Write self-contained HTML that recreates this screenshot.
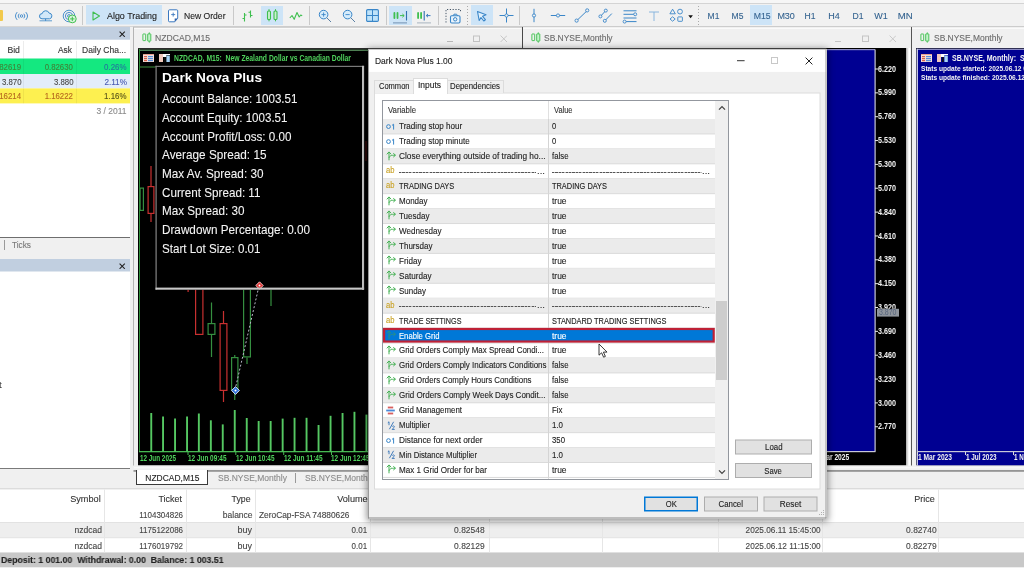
<!DOCTYPE html>
<html><head><meta charset="utf-8"><title>MetaTrader 5</title>
<style>
html,body{margin:0;padding:0;}
body{width:1024px;height:576px;overflow:hidden;background:#f0f0f0;position:relative;font-family:"Liberation Sans",sans-serif;}
div,span,svg{position:absolute;box-sizing:border-box;}
span{display:block;-webkit-text-stroke:0.12px;}
</style></head><body><div style="left:0;top:0;width:1024px;height:576px;will-change:transform;">
<div style="left:0px;top:0px;width:1024px;height:3px;background:#f6f6f6;"></div>
<div style="left:0px;top:3px;width:1024px;height:1px;background:#d4d4d4;"></div>
<div style="left:0px;top:4px;width:1024px;height:22px;background:#f1f1f1;"></div>
<div style="left:0px;top:26px;width:1024px;height:1px;background:#d6d6d6;"></div>
<div style="left:-3px;top:10px;width:6px;height:11px;background:#f2c94c;border-radius:1px;"></div>
<svg style="left:13px;top:8.7px;" width="17" height="14" viewBox="0 0 17 14" fill="none"><g transform="translate(8.5,7)"><circle cx="0" cy="0" r="1.25" stroke="#3a86c8" stroke-width=".9"/><path d="M-2.3 -2.3a3.3 3.3 0 0 0 0 4.6M2.3 -2.3a3.3 3.3 0 0 1 0 4.6M-4.3 -3.9a5.9 5.9 0 0 0 0 7.8M4.3 -3.9a5.9 5.9 0 0 1 0 7.8" stroke="#3a86c8" stroke-width="0.9"/></g></svg>
<svg style="left:38px;top:8.5px;" width="16" height="14" viewBox="0 0 16 14" fill="none"><path d="M4 9.8a2.6 2.6 0 0 1 .2-5.2a3.6 3.6 0 0 1 6.9-.5a2.9 2.9 0 0 1 .6 5.7z" fill="#d2e8f9" stroke="#3a86c8" stroke-width="1"/><path d="M7.6 9.8v2" stroke="#3a86c8" stroke-width="1"/><path d="M1.5 11.8h12.5" stroke="#3a86c8" stroke-width=".8"/></svg>
<svg style="left:62px;top:8.5px;" width="17" height="16" viewBox="0 0 17 16" fill="none"><circle cx="7" cy="7" r="1.4" stroke="#3a86c8" stroke-width="0.9"/><circle cx="7" cy="7" r="3.6" stroke="#3a86c8" stroke-width="0.9"/><circle cx="7" cy="7" r="5.8" stroke="#3a86c8" stroke-width="0.9"/><circle cx="10.3" cy="9.9" r="3.9" fill="#dcf6df" stroke="#3fbf4f" stroke-width="1"/><path d="M10.3 7.7v4.4M8.1 9.9h4.4" stroke="#3fbf4f" stroke-width="1"/></svg>
<div style="left:82px;top:6px;width:1px;height:19px;background:#c9c9c9;"></div>
<svg style="left:86px;top:5px;" width="76" height="20"><rect x="0" y="0" width="76" height="19.5" fill="#cde4f7"/></svg>
<svg style="left:92px;top:10.5px;" width="9" height="10" viewBox="0 0 9 10" fill="none"><path d="M1 1l6.5 4L1 9z" stroke="#3fbf4f" stroke-width="1.1" stroke-linejoin="round"/></svg>
<span style="top:9.80px;line-height:12px;height:12px;font-size:9.6px;color:#222;white-space:pre;left:106.50px;transform:scaleX(0.9281);transform-origin:left center;">Algo Trading</span>
<svg style="left:168px;top:8.5px;" width="11" height="14" viewBox="0 0 11 14" fill="none"><path d="M1.5 .8h7.2a1 1 0 0 1 1 1v7.4l-3 3.6H1.5a1 1 0 0 1-1-1V1.8a1 1 0 0 1 1-1z" fill="#fff" stroke="#3a78c0" stroke-width="1"/><path d="M9.7 9.4l-3 3.4v-3.4z" fill="#2b5fa8"/><path d="M5.2 3.6v4M3.2 5.6h4" stroke="#3a78c0" stroke-width="0.9"/></svg>
<span style="top:9.80px;line-height:12px;height:12px;font-size:9.6px;color:#222;white-space:pre;left:184.00px;transform:scaleX(0.8946);transform-origin:left center;">New Order</span>
<div style="left:233px;top:6px;width:1px;height:19px;background:#c9c9c9;"></div>
<svg style="left:241px;top:9.5px;" width="13" height="12" viewBox="0 0 13 12" fill="none"><path d="M3.5 3v8.5M1.5 8.5h2M3.5 5h2M9.5 .5v7M7.5 2.2h2M9.5 5.5h2" stroke="#3fbf4f" stroke-width="1.1"/></svg>
<div style="left:261px;top:6px;width:22px;height:19px;background:#cde4f7;"></div>
<svg style="left:265px;top:8.1px;" width="15" height="15" viewBox="0 0 15 15" fill="none"><rect x="2.5" y="3" width="3" height="8.5" rx="1" stroke="#3fbf4f" stroke-width="1.1" fill="#c9f0cf"/><path d="M4 1.2v1.8M4 11.5v1.8" stroke="#3fbf4f" stroke-width="1"/><rect x="9" y="3" width="3" height="8.5" rx="1" stroke="#3fbf4f" stroke-width="1.1" fill="#c9f0cf"/><path d="M10.5 1.2v1.8M10.5 11.5v1.8" stroke="#3fbf4f" stroke-width="1"/></svg>
<svg style="left:289px;top:9.5px;" width="14" height="12" viewBox="0 0 14 12" fill="none"><path d="M.8 8l2.2-2.5 2.2 3.8L8 2.5l2.2 4.5 1.5-2 1.5 .8" stroke="#3fbf4f" stroke-width="1.1" stroke-linejoin="round"/></svg>
<div style="left:309px;top:6px;width:1px;height:19px;background:#c9c9c9;"></div>
<svg style="left:317.5px;top:9px;" width="14" height="14" viewBox="0 0 14 14" fill="none"><circle cx="5.6" cy="5.6" r="4.3" fill="#d6ecfb" stroke="#3a86c8" stroke-width="1"/><path d="M8.8 8.8l4.2 4.2" stroke="#5a7fa3" stroke-width="1"/><path d="M3.5 5.6h4.2" stroke="#3a86c8" stroke-width="0.9"/><path d="M5.6 3.5v4.2" stroke="#3a86c8" stroke-width="0.9"/></svg>
<svg style="left:341.5px;top:9px;" width="14" height="14" viewBox="0 0 14 14" fill="none"><circle cx="5.6" cy="5.6" r="4.3" fill="#d6ecfb" stroke="#3a86c8" stroke-width="1"/><path d="M8.8 8.8l4.2 4.2" stroke="#5a7fa3" stroke-width="1"/><path d="M3.5 5.6h4.2" stroke="#3a86c8" stroke-width="0.9"/></svg>
<svg style="left:366px;top:9.1px;" width="13" height="13" viewBox="0 0 13 13" fill="none"><rect x=".6" y=".6" width="11.8" height="11.8" rx="1.2" fill="#bfe3fa" stroke="#3a86c8" stroke-width="1.1"/><path d="M6.5 .6v11.8M.6 6.5h11.8" stroke="#3a86c8" stroke-width="1"/></svg>
<div style="left:386px;top:6px;width:1px;height:19px;background:#c9c9c9;"></div>
<div style="left:389px;top:6px;width:23px;height:19px;background:#cde4f7;"></div>
<svg style="left:392px;top:9.5px;" width="17" height="14" viewBox="0 0 17 14" fill="none"><rect x="1.5" y="2" width="1.8" height="7" rx=".9" fill="#3fbf4f"/><rect x="4.6" y="2" width="1.8" height="7" rx=".9" fill="#3fbf4f"/><path d="M8 5.6h4M10.4 4l1.8 1.6-1.8 1.6" stroke="#3fbf4f" stroke-width="1"/><path d="M14.5 1v9.5" stroke="#2f6fae" stroke-width="1.1"/><path d="M1 12.9h14" stroke="#4a6f96" stroke-width="0.7"/></svg>
<svg style="left:416px;top:9.5px;" width="17" height="14" viewBox="0 0 17 14" fill="none"><rect x="1.2" y="2" width="1.8" height="7" rx=".9" fill="#3fbf4f"/><rect x="4.2" y="2" width="1.8" height="7" rx=".9" fill="#3fbf4f"/><path d="M8.2 1v9.5" stroke="#2f6fae" stroke-width="1.1"/><path d="M10.5 5.6h4M12 4l-1.8 1.6 1.8 1.6" stroke="#3a78c0" stroke-width="1"/><path d="M1 12.9h14" stroke="#8a9aaa" stroke-width="0.7"/></svg>
<div style="left:438px;top:6px;width:1px;height:19px;background:#c9c9c9;"></div>
<svg style="left:445px;top:7.5px;" width="18" height="17" viewBox="0 0 18 17" fill="none"><path d="M1 14.5V1.5h14.5v3" stroke="#456" stroke-width="1" stroke-dasharray="1.2 1.6"/><rect x="5.5" y="7.8" width="9.5" height="7.2" rx="1.2" stroke="#3a86c8" stroke-width="1.1" fill="#eaf4fc"/><path d="M8 7.8l1-1.6h2.6l1 1.6" stroke="#3a86c8" stroke-width="1"/><circle cx="10.2" cy="11.3" r="1.7" stroke="#3a86c8" stroke-width="1"/></svg>
<div style="left:467px;top:6px;width:1px;height:19px;background:repeating-linear-gradient(to bottom,#aaa 0 1px,transparent 1px 3px);"></div>
<div style="left:471px;top:5px;width:22px;height:20px;background:#cde4f7;"></div>
<svg style="left:476px;top:9.5px;" width="12" height="12" viewBox="0 0 12 12" fill="none"><path d="M1.5 1.5l8.5 3.2-3.4 1.6 2.8 3.4-1.6 1.3-2.8-3.5-1.8 3z" stroke="#3a86c8" stroke-width="1.1" stroke-linejoin="round" fill="#dff0fc"/></svg>
<svg style="left:499px;top:8.1px;" width="15" height="15" viewBox="0 0 15 15" fill="none"><path d="M7.5 .5v14M.5 7.5h14" stroke="#3a86c8" stroke-width="1"/><circle cx="7.5" cy="7.5" r="1.6" fill="#f1f1f1" stroke="#3a86c8" stroke-width="0.9"/></svg>
<div style="left:519px;top:6px;width:1px;height:19px;background:#c9c9c9;"></div>
<svg style="left:528px;top:7.8px;" width="12" height="15" viewBox="0 0 12 15" fill="none"><path d="M6 .8v13.4" stroke="#3a86c8" stroke-width="1"/><circle cx="6" cy="7.5" r="1.6" fill="#f1f1f1" stroke="#3a86c8" stroke-width="0.9"/></svg>
<svg style="left:550px;top:9.1px;" width="16" height="12" viewBox="0 0 16 12" fill="none"><path d="M.8 6.5h14.4" stroke="#3a86c8" stroke-width="1"/><circle cx="8" cy="6.5" r="1.6" fill="#f1f1f1" stroke="#3a86c8" stroke-width="0.9"/></svg>
<svg style="left:574px;top:8.1px;" width="16" height="15" viewBox="0 0 16 15" fill="none"><path d="M3 12.4L13 2.8" stroke="#3a86c8" stroke-width="1"/><circle cx="2.6" cy="12.6" r="1.6" fill="#f1f1f1" stroke="#3a86c8" stroke-width="0.9"/><circle cx="13.2" cy="2.4" r="1.6" fill="#f1f1f1" stroke="#3a86c8" stroke-width="0.9"/></svg>
<svg style="left:598px;top:8.1px;" width="16" height="15" viewBox="0 0 16 15" fill="none"><path d="M2.8 8L7.4 3M7.2 12.4L13.8 5.6" stroke="#3a86c8" stroke-width="1"/><circle cx="2.4" cy="8.4" r="1.5" fill="#f1f1f1" stroke="#3a86c8" stroke-width="0.9"/><circle cx="7.8" cy="2.6" r="1.5" fill="#f1f1f1" stroke="#3a86c8" stroke-width="0.9"/><circle cx="6.8" cy="12.8" r="1.5" fill="#f1f1f1" stroke="#3a86c8" stroke-width="0.9"/></svg>
<svg style="left:622px;top:8.5px;" width="16" height="15" viewBox="0 0 16 15" fill="none"><path d="M1.5 1.8h13M1.5 5.3h10.5M1.5 9h13M4 12.6h10.5" stroke="#3a86c8" stroke-width="1"/><circle cx="13.2" cy="5.3" r="1.5" fill="#f1f1f1" stroke="#3a86c8" stroke-width="0.9"/><circle cx="2.6" cy="12.6" r="1.5" fill="#f1f1f1" stroke="#3a86c8" stroke-width="0.9"/></svg>
<svg style="left:648px;top:9.5px;" width="12" height="13" viewBox="0 0 12 13" fill="none"><path d="M1 2h10M6 2v9" stroke="#7fb0dc" stroke-width=".9"/></svg>
<svg style="left:669px;top:8.1px;" width="15" height="15" viewBox="0 0 15 15" fill="none"><path d="M3.6 1.2l2.7 4.6H.9z" stroke="#3a86c8" stroke-width="0.9"/><circle cx="11" cy="3.6" r="2.4" stroke="#3a86c8" stroke-width="0.9"/><path d="M3.6 8.8l2.6 2.2-2.6 2.2L1 11z" stroke="#3a86c8" stroke-width="0.9"/><rect x="8.8" y="8.9" width="4.6" height="4.4" rx=".5" stroke="#3a86c8" stroke-width="0.9"/></svg>
<svg style="left:688px;top:14.5px;" width="6" height="4" viewBox="0 0 6 4" fill="none"><path d="M.3 .3h4.6L2.6 3.2z" fill="#111"/></svg>
<div style="left:698px;top:6px;width:1px;height:19px;background:repeating-linear-gradient(to bottom,#aaa 0 1px,transparent 1px 3px);"></div>
<div style="left:750px;top:5px;width:22px;height:20px;background:#cde4f7;"></div>
<span style="top:9.70px;line-height:12px;height:12px;font-size:9.4px;color:#33628f;white-space:pre;left:706.98px;transform:scaleX(0.9055);transform-origin:center center;-webkit-text-stroke:0.1px;">M1</span>
<span style="top:9.70px;line-height:12px;height:12px;font-size:9.4px;color:#33628f;white-space:pre;left:731.48px;transform:scaleX(0.9132);transform-origin:center center;-webkit-text-stroke:0.1px;">M5</span>
<span style="top:9.70px;line-height:12px;height:12px;font-size:9.4px;color:#33628f;white-space:pre;left:752.88px;transform:scaleX(0.9315);transform-origin:center center;-webkit-text-stroke:0.1px;">M15</span>
<span style="top:9.70px;line-height:12px;height:12px;font-size:9.4px;color:#33628f;white-space:pre;left:776.67px;transform:scaleX(0.9589);transform-origin:center center;-webkit-text-stroke:0.1px;">M30</span>
<span style="top:9.70px;line-height:12px;height:12px;font-size:9.4px;color:#33628f;white-space:pre;left:804.01px;transform:scaleX(0.9179);transform-origin:center center;-webkit-text-stroke:0.1px;">H1</span>
<span style="top:9.70px;line-height:12px;height:12px;font-size:9.4px;color:#33628f;white-space:pre;left:827.81px;transform:scaleX(0.9596);transform-origin:center center;-webkit-text-stroke:0.1px;">H4</span>
<span style="top:9.70px;line-height:12px;height:12px;font-size:9.4px;color:#33628f;white-space:pre;left:851.51px;transform:scaleX(0.9179);transform-origin:center center;-webkit-text-stroke:0.1px;">D1</span>
<span style="top:9.70px;line-height:12px;height:12px;font-size:9.4px;color:#33628f;white-space:pre;left:874.27px;transform:scaleX(0.9600);transform-origin:center center;-webkit-text-stroke:0.1px;">W1</span>
<span style="top:9.70px;line-height:12px;height:12px;font-size:9.4px;color:#33628f;white-space:pre;left:898.20px;transform:scaleX(1.0278);transform-origin:center center;-webkit-text-stroke:0.1px;">MN</span>
<div style="left:0px;top:27px;width:130px;height:441px;background:#ffffff;"></div>
<svg style="left:0px;top:27px;" width="130" height="13"><rect x="0" y="0" width="130" height="12.7" fill="#c1cfe0"/></svg>
<svg style="left:119.3px;top:30.6px;" width="6.4" height="6.4" viewBox="0 0 6.4 6.4"><path d="M.6 .6L5.8 5.8M5.8 .6L.6 5.8" stroke="#222" stroke-width="1.1" fill="none"/></svg>
<div style="left:23px;top:41px;width:1px;height:17px;background:#ececec;"></div>
<div style="left:76px;top:41px;width:1px;height:17px;background:#ececec;"></div>
<span style="top:43.80px;line-height:12px;height:12px;font-size:9.6px;color:#333;white-space:pre;left:5.62px;transform:scaleX(0.9009);transform-origin:right center;">Bid</span>
<span style="top:43.80px;line-height:12px;height:12px;font-size:9.6px;color:#333;white-space:pre;left:56.00px;transform:scaleX(0.8750);transform-origin:right center;">Ask</span>
<span style="top:43.80px;line-height:12px;height:12px;font-size:9.6px;color:#333;white-space:pre;left:82.00px;transform:scaleX(0.8872);transform-origin:left center;">Daily Cha...</span>
<svg style="left:0px;top:58px;" width="130" height="16"><rect x="0" y="0.5" width="130" height="15.5" fill="#14e880"/></svg>
<svg style="left:23px;top:58px;" width="1" height="16"><rect x="0" y="0.5" width="1" height="15.5" fill="rgba(0,0,0,.05)"/></svg>
<svg style="left:76px;top:58px;" width="1" height="16"><rect x="0" y="0.5" width="1" height="15.5" fill="rgba(0,0,0,.05)"/></svg>
<span style="top:60.55px;line-height:12px;height:12px;font-size:9.4px;color:#3f8438;white-space:pre;left:-5.08px;transform:scaleX(0.8398);transform-origin:right center;">82619</span>
<span style="top:60.55px;line-height:12px;height:12px;font-size:9.4px;color:#3f8438;white-space:pre;left:39.11px;transform:scaleX(0.8336);transform-origin:right center;">0.82630</span>
<span style="top:60.55px;line-height:12px;height:12px;font-size:9.4px;color:#25789c;white-space:pre;left:100.41px;transform:scaleX(0.8461);transform-origin:right center;">0.26%</span>
<svg style="left:0px;top:74px;" width="130" height="15"><rect x="0" y="0" width="130" height="14.4" fill="#e3edf9"/></svg>
<svg style="left:23px;top:74px;" width="1" height="15"><rect x="0" y="0" width="1" height="14.4" fill="rgba(0,0,0,.05)"/></svg>
<svg style="left:76px;top:74px;" width="1" height="15"><rect x="0" y="0" width="1" height="14.4" fill="rgba(0,0,0,.05)"/></svg>
<span style="top:75.50px;line-height:12px;height:12px;font-size:9.4px;color:#484848;white-space:pre;left:-2.47px;transform:scaleX(0.8309);transform-origin:right center;">3.870</span>
<span style="top:75.50px;line-height:12px;height:12px;font-size:9.4px;color:#484848;white-space:pre;left:49.53px;transform:scaleX(0.8309);transform-origin:right center;">3.880</span>
<span style="top:75.50px;line-height:12px;height:12px;font-size:9.4px;color:#4858b0;white-space:pre;left:101.11px;transform:scaleX(0.8690);transform-origin:right center;">2.11%</span>
<svg style="left:0px;top:88px;" width="130" height="16"><rect x="0" y="0.4" width="130" height="15" fill="#fdf050"/></svg>
<svg style="left:23px;top:88px;" width="1" height="16"><rect x="0" y="0.4" width="1" height="15" fill="rgba(0,0,0,.05)"/></svg>
<svg style="left:76px;top:88px;" width="1" height="16"><rect x="0" y="0.4" width="1" height="15" fill="rgba(0,0,0,.05)"/></svg>
<span style="top:90.20px;line-height:12px;height:12px;font-size:9.4px;color:#b4661e;white-space:pre;left:-5.08px;transform:scaleX(0.8398);transform-origin:right center;">16214</span>
<span style="top:90.20px;line-height:12px;height:12px;font-size:9.4px;color:#b4661e;white-space:pre;left:39.11px;transform:scaleX(0.8336);transform-origin:right center;">1.16222</span>
<span style="top:90.20px;line-height:12px;height:12px;font-size:9.4px;color:#55501a;white-space:pre;left:100.41px;transform:scaleX(0.8461);transform-origin:right center;">1.16%</span>
<span style="top:105.00px;line-height:12px;height:12px;font-size:9.2px;color:#8a8a8a;white-space:pre;left:94.47px;transform:scaleX(0.9222);transform-origin:right center;">3 / 2011</span>
<div style="left:0px;top:237px;width:130px;height:1px;background:#6e6e6e;"></div>
<div style="left:0px;top:238px;width:130px;height:21px;background:#f0f0f0;"></div>
<div style="left:4px;top:240px;width:1px;height:10px;background:#9a9a9a;"></div>
<span style="top:238.70px;line-height:12px;height:12px;font-size:9.4px;color:#777;white-space:pre;left:12.00px;transform:scaleX(0.8824);transform-origin:left center;">Ticks</span>
<svg style="left:0px;top:259px;" width="130" height="13"><rect x="0" y="0" width="130" height="12.5" fill="#c1cfe0"/></svg>
<svg style="left:119.3px;top:262.6px;" width="6.4" height="6.4" viewBox="0 0 6.4 6.4"><path d="M.6 .6L5.8 5.8M5.8 .6L.6 5.8" stroke="#222" stroke-width="1.1" fill="none"/></svg>
<span style="top:379.00px;line-height:12px;height:12px;font-size:9.4px;color:#333;white-space:pre;left:-1.00px;">t</span>
<div style="left:0px;top:468px;width:130px;height:1px;background:#7a7a7a;"></div>
<div style="left:0px;top:469px;width:130px;height:19px;background:#f0f0f0;"></div>
<div style="left:133px;top:27px;width:389px;height:442px;background:#f0f0f0;"></div>
<div style="left:133px;top:27px;width:1px;height:442px;background:#b4b4b4;"></div>
<svg style="left:133px;top:26px;" width="891" height="2"><rect x="0" y="0.6" width="891" height="1" fill="#bebebe"/></svg>
<div style="left:134px;top:28px;width:387px;height:1px;background:#fafafa;"></div>
<svg style="left:141.5px;top:32px;" width="10" height="11" viewBox="0 0 10 11" fill="none"><rect x=".9" y="2" width="2.8" height="6.6" rx=".3" stroke="#4cc45a" stroke-width="1"/><rect x="5.7" y="1.9" width="3.1" height="7.2" rx=".3" stroke="#4cc45a" stroke-width="1" fill="#c4f2ca"/><path d="M7.3 .3v1.7M7.3 9v1.7" stroke="#4cc45a" stroke-width=".9"/></svg>
<span style="top:31.60px;line-height:12px;height:12px;font-size:9.6px;color:#6a6a6a;white-space:pre;left:155.00px;transform:scaleX(0.8970);transform-origin:left center;">NZDCAD,M15</span>
<div style="left:447px;top:41px;width:6px;height:1px;background:#b8b8b8;"></div>
<svg style="left:473px;top:35px;" width="7" height="7"><rect x="0.5" y="1" width="6" height="5.5" fill="none" stroke="#c2c2c2" stroke-width="1"/></svg>
<svg style="left:499.7px;top:34.9px;" width="7.6" height="7.6" viewBox="0 0 7.6 7.6"><path d="M.6 .6L7 7M7 .6L.6 7" stroke="#c2c2c2" stroke-width="0.9" fill="none"/></svg>
<svg style="left:138px;top:48px;" width="384" height="418"><rect x="0" y="0" width="384" height="417.5" fill="#000"/></svg>
<svg style="left:138px;top:48px;" width="384" height="2"><rect x="0" y="0" width="384" height="1.4" fill="#2c2c2c"/></svg>
<svg style="left:139px;top:49px;" width="383" height="2"><rect x="0" y="0.6" width="383" height="1.4" fill="#4f7f54"/></svg>
<div style="left:139px;top:49px;width:1px;height:403px;background:#2f8f3a;"></div>
<svg style="left:139px;top:451px;" width="383" height="2"><rect x="0" y="0" width="383" height="1.3" fill="#46b852"/></svg>
<svg style="left:143px;top:54.2px;" width="11" height="8" viewBox="0 0 11 8"><rect width="11" height="8" fill="#f4ded8"/><rect x="0" y="0" width="11" height="1" fill="#e8a090"/><rect x="1" y="2" width="3" height="1.2" fill="#d8604a"/><rect x="1" y="4" width="3" height="1.2" fill="#d8604a"/><rect x="1" y="6" width="3" height="1.2" fill="#d8604a"/><rect x="5" y="2" width="5" height="1.2" fill="#5a90d8"/><rect x="5" y="4" width="5" height="1.2" fill="#5a90d8"/><rect x="5" y="6" width="5" height="1.2" fill="#5a90d8"/></svg>
<svg style="left:159px;top:54.2px;" width="11" height="8" viewBox="0 0 11 8"><rect x="0" y="0" width="4" height="8" fill="#f2c9bc"/><rect x="4" y="0" width="3.4" height="3" fill="#fff"/><rect x="5" y="3" width="1.6" height="5" fill="#111"/><rect x="7.4" y="1.5" width="3.4" height="6.5" fill="#a8d4f5"/><rect x="4" y="0" width="7" height="1" fill="#fff"/></svg>
<span style="top:52.80px;line-height:11px;height:11px;font-size:8.4px;color:#4fd25c;white-space:pre;font-weight:700;left:174.00px;transform:scaleX(0.8092);transform-origin:left center;-webkit-text-stroke:0;">NZDCAD, M15:  New Zealand Dollar vs Canadian Dollar</span>
<svg style="left:139px;top:187px;" width="5" height="24"><rect x="1.1" y="1.1" width="3.3" height="22.3" fill="none" stroke="#358f40" stroke-width="1.2"/></svg>
<svg style="left:150px;top:166px;" width="2" height="20"><rect x="0.4" y="0" width="1.2" height="20" fill="#c83030"/></svg>
<svg style="left:150px;top:214px;" width="2" height="8"><rect x="0.4" y="0" width="1.2" height="8" fill="#c83030"/></svg>
<svg style="left:147px;top:186px;" width="8" height="28"><rect x="1.1" y="0.6" width="5.8" height="26.8" fill="none" stroke="#c83030" stroke-width="1.2"/></svg>
<svg style="left:195px;top:280px;" width="9" height="55"><rect x="0.6" y="0.6" width="7.3" height="53.8" fill="none" stroke="#c83030" stroke-width="1.2"/></svg>
<svg style="left:210px;top:302px;" width="3" height="21"><rect x="0.9" y="0.5" width="1.2" height="20.5" fill="#358f40"/></svg>
<svg style="left:210px;top:335px;" width="3" height="22"><rect x="0.9" y="0" width="1.2" height="22" fill="#358f40"/></svg>
<svg style="left:207px;top:323px;" width="9" height="12"><rect x="1.1" y="0.6" width="6.8" height="10.8" fill="none" stroke="#358f40" stroke-width="1.2"/></svg>
<svg style="left:222px;top:311px;" width="3" height="12"><rect x="0.9" y="0" width="1.2" height="12" fill="#c83030"/></svg>
<svg style="left:222px;top:391px;" width="3" height="11"><rect x="0.9" y="0" width="1.2" height="11" fill="#c83030"/></svg>
<svg style="left:219px;top:323px;" width="9" height="68"><rect x="1.1" y="0.6" width="6.8" height="66.8" fill="none" stroke="#c83030" stroke-width="1.2"/></svg>
<svg style="left:234px;top:355px;" width="2" height="2"><rect x="0.15" y="0" width="1.2" height="2" fill="#358f40"/></svg>
<svg style="left:234px;top:390px;" width="2" height="10"><rect x="0.15" y="0.5" width="1.2" height="9.5" fill="#358f40"/></svg>
<svg style="left:231px;top:357px;" width="8" height="34"><rect x="0.6" y="0.6" width="6.3" height="32.3" fill="none" stroke="#358f40" stroke-width="1.2"/></svg>
<svg style="left:246px;top:357px;" width="2" height="7"><rect x="0.4" y="0.5" width="1.2" height="6.5" fill="#358f40"/></svg>
<svg style="left:243px;top:280px;" width="8" height="78"><rect x="0.6" y="0.6" width="6.8" height="76.3" fill="none" stroke="#358f40" stroke-width="1.2"/></svg>
<svg style="left:270px;top:280px;" width="2" height="26"><rect x="0.4" y="0" width="1.2" height="26" fill="#358f40"/></svg>
<svg style="left:187px;top:285px;" width="2" height="7"><rect x="0.5" y="0" width="1.2" height="7" fill="#c83030"/></svg>
<svg style="left:230px;top:280px;" width="40" height="120" viewBox="0 0 40 120"><path d="M5 110L29 6" stroke="#b8b8c8" stroke-width="1" stroke-dasharray="2 2"/></svg>
<svg style="left:231px;top:386px;" width="9" height="9" viewBox="0 0 9 9"><path d="M4.5 .6L8.4 4.5 4.5 8.4 .6 4.5z" fill="#2f6fd8" stroke="#e8f0ff" stroke-width=".9"/><circle cx="4.5" cy="4.5" r="1" fill="#fff"/></svg>
<svg style="left:150px;top:413px;" width="3" height="39"><rect x="0.3" y="0" width="1.9" height="38.5" fill="#55c862"/></svg>
<svg style="left:162px;top:416px;" width="2" height="36"><rect x="0.1" y="0.5" width="1.9" height="35" fill="#55c862"/></svg>
<svg style="left:174px;top:418px;" width="2" height="34"><rect x="0.1" y="0.5" width="1.9" height="33" fill="#55c862"/></svg>
<svg style="left:186px;top:416px;" width="2" height="36"><rect x="0.1" y="0.5" width="1.9" height="35" fill="#55c862"/></svg>
<svg style="left:197px;top:413px;" width="3" height="39"><rect x="0.9" y="0.5" width="1.9" height="38" fill="#55c862"/></svg>
<svg style="left:209px;top:420px;" width="3" height="32"><rect x="0.9" y="0.3" width="1.9" height="31.2" fill="#55c862"/></svg>
<svg style="left:221px;top:424px;" width="3" height="28"><rect x="0.8" y="0.4" width="1.9" height="27.1" fill="#55c862"/></svg>
<svg style="left:233px;top:410px;" width="3" height="42"><rect x="0.8" y="0" width="1.9" height="41.5" fill="#55c862"/></svg>
<svg style="left:245px;top:418px;" width="3" height="34"><rect x="0.8" y="0" width="1.9" height="33.5" fill="#55c862"/></svg>
<svg style="left:257px;top:421px;" width="3" height="31"><rect x="0.7" y="0" width="1.9" height="30.5" fill="#55c862"/></svg>
<svg style="left:269px;top:421px;" width="3" height="31"><rect x="0.7" y="0" width="1.9" height="30.5" fill="#55c862"/></svg>
<svg style="left:281px;top:418px;" width="3" height="34"><rect x="0.7" y="0.6" width="1.9" height="32.9" fill="#55c862"/></svg>
<svg style="left:293px;top:417px;" width="3" height="35"><rect x="0.6" y="0.8" width="1.9" height="33.7" fill="#55c862"/></svg>
<svg style="left:305px;top:417px;" width="3" height="35"><rect x="0.6" y="0.8" width="1.9" height="33.7" fill="#55c862"/></svg>
<svg style="left:317px;top:425px;" width="3" height="27"><rect x="0.6" y="0" width="1.9" height="26.5" fill="#55c862"/></svg>
<svg style="left:329px;top:415px;" width="3" height="37"><rect x="0.6" y="0.8" width="1.9" height="35.7" fill="#55c862"/></svg>
<svg style="left:341px;top:413px;" width="3" height="39"><rect x="0.6" y="0" width="1.9" height="38.5" fill="#55c862"/></svg>
<svg style="left:353px;top:411px;" width="3" height="41"><rect x="0.5" y="0.8" width="1.9" height="39.7" fill="#55c862"/></svg>
<svg style="left:365px;top:414px;" width="3" height="38"><rect x="0.5" y="0.6" width="1.9" height="36.9" fill="#55c862"/></svg>
<svg style="left:187px;top:452px;" width="2" height="3"><rect x="0.5" y="0" width="1" height="3" fill="#46b852"/></svg>
<svg style="left:235px;top:452px;" width="2" height="3"><rect x="0.3" y="0" width="1" height="3" fill="#46b852"/></svg>
<svg style="left:283px;top:452px;" width="2" height="3"><rect x="0.2" y="0" width="1" height="3" fill="#46b852"/></svg>
<div style="left:331px;top:452px;width:1px;height:3px;background:#46b852;"></div>
<span style="top:452.50px;line-height:11px;height:11px;font-size:8.2px;color:#4fd25c;white-space:pre;font-weight:700;left:140.00px;transform:scaleX(0.7752);transform-origin:left center;-webkit-text-stroke:0;">12 Jun 2025</span>
<span style="top:452.50px;line-height:11px;height:11px;font-size:8.2px;color:#4fd25c;white-space:pre;font-weight:700;left:187.80px;transform:scaleX(0.7832);transform-origin:left center;-webkit-text-stroke:0;">12 Jun 09:45</span>
<span style="top:452.50px;line-height:11px;height:11px;font-size:8.2px;color:#4fd25c;white-space:pre;font-weight:700;left:235.70px;transform:scaleX(0.7832);transform-origin:left center;-webkit-text-stroke:0;">12 Jun 10:45</span>
<span style="top:452.50px;line-height:11px;height:11px;font-size:8.2px;color:#4fd25c;white-space:pre;font-weight:700;left:283.50px;transform:scaleX(0.7905);transform-origin:left center;-webkit-text-stroke:0;">12 Jun 11:45</span>
<span style="top:452.50px;line-height:11px;height:11px;font-size:8.2px;color:#4fd25c;white-space:pre;font-weight:700;left:331.40px;transform:scaleX(0.7832);transform-origin:left center;-webkit-text-stroke:0;">12 Jun 12:45</span>
<svg style="left:140px;top:66px;" width="16" height="2"><rect x="0" y="0.5" width="16" height="1" fill="#3f8f3f"/></svg>
<svg style="left:155px;top:65px;" width="210" height="225"><rect x="0.5" y="0.8" width="208.6" height="224" fill="#000"/></svg>
<svg style="left:155px;top:65px;" width="210" height="2"><rect x="0.5" y="0.8" width="208.6" height="1.2" fill="#7a7a7a"/></svg>
<svg style="left:155px;top:65px;" width="2" height="225"><rect x="0.5" y="0.8" width="1.2" height="224" fill="#848484"/></svg>
<svg style="left:255px;top:281.3px;" width="9" height="9" viewBox="0 0 9 9"><path d="M4.5 .8L8.2 4.5 4.5 8.2 .8 4.5z" fill="#e03030" stroke="#ffd0d0" stroke-width=".9"/><circle cx="4.5" cy="4.5" r="1" fill="#fff"/></svg>
<svg style="left:362px;top:65px;" width="3" height="225"><rect x="0" y="0.8" width="2.1" height="224" fill="#c8c8c8"/></svg>
<svg style="left:155px;top:287px;" width="210" height="3"><rect x="0.5" y="0.6" width="208.6" height="2.1" fill="#c8c8c8"/></svg>
<svg style="left:365px;top:141px;" width="2" height="20"><rect x="0.5" y="0" width="1" height="20" fill="#501010"/></svg>
<span style="top:69.00px;line-height:17px;height:17px;font-size:13.2px;color:#fff;white-space:pre;font-weight:700;left:162.30px;transform:scaleX(1.0336);transform-origin:left center;-webkit-text-stroke:0;">Dark Nova Plus</span>
<span style="top:91.00px;line-height:16px;height:16px;font-size:12.4px;color:#f4f4f4;white-space:pre;left:162.30px;transform:scaleX(0.9366);transform-origin:left center;-webkit-text-stroke:0.08px;">Account Balance: 1003.51</span>
<span style="top:109.80px;line-height:16px;height:16px;font-size:12.4px;color:#f4f4f4;white-space:pre;left:162.30px;transform:scaleX(0.9343);transform-origin:left center;-webkit-text-stroke:0.08px;">Account Equity: 1003.51</span>
<span style="top:128.50px;line-height:16px;height:16px;font-size:12.4px;color:#f4f4f4;white-space:pre;left:162.30px;transform:scaleX(0.9401);transform-origin:left center;-webkit-text-stroke:0.08px;">Account Profit/Loss: 0.00</span>
<span style="top:147.20px;line-height:16px;height:16px;font-size:12.4px;color:#f4f4f4;white-space:pre;left:162.30px;transform:scaleX(0.9500);transform-origin:left center;-webkit-text-stroke:0.08px;">Average Spread: 15</span>
<span style="top:165.80px;line-height:16px;height:16px;font-size:12.4px;color:#f4f4f4;white-space:pre;left:162.30px;transform:scaleX(0.9486);transform-origin:left center;-webkit-text-stroke:0.08px;">Max Av. Spread: 30</span>
<span style="top:184.50px;line-height:16px;height:16px;font-size:12.4px;color:#f4f4f4;white-space:pre;left:162.30px;transform:scaleX(0.9429);transform-origin:left center;-webkit-text-stroke:0.08px;">Current Spread: 11</span>
<span style="top:203.00px;line-height:16px;height:16px;font-size:12.4px;color:#f4f4f4;white-space:pre;left:162.30px;transform:scaleX(0.9430);transform-origin:left center;-webkit-text-stroke:0.08px;">Max Spread: 30</span>
<span style="top:221.80px;line-height:16px;height:16px;font-size:12.4px;color:#f4f4f4;white-space:pre;left:162.30px;transform:scaleX(0.9465);transform-origin:left center;-webkit-text-stroke:0.08px;">Drawdown Percentage: 0.00</span>
<span style="top:240.50px;line-height:16px;height:16px;font-size:12.4px;color:#f4f4f4;white-space:pre;left:162.30px;transform:scaleX(0.9346);transform-origin:left center;-webkit-text-stroke:0.08px;">Start Lot Size: 0.01</span>
<div style="left:522px;top:27px;width:1px;height:443px;background:#484848;"></div>
<div style="left:523px;top:27px;width:388px;height:442px;background:#f0f0f0;"></div>
<div style="left:523px;top:28px;width:388px;height:1px;background:#fafafa;"></div>
<svg style="left:531px;top:32px;" width="10" height="11" viewBox="0 0 10 11" fill="none"><rect x=".9" y="2" width="2.8" height="6.6" rx=".3" stroke="#4cc45a" stroke-width="1"/><rect x="5.7" y="1.9" width="3.1" height="7.2" rx=".3" stroke="#4cc45a" stroke-width="1" fill="#c4f2ca"/><path d="M7.3 .3v1.7M7.3 9v1.7" stroke="#4cc45a" stroke-width=".9"/></svg>
<span style="top:31.60px;line-height:12px;height:12px;font-size:9.6px;color:#6a6a6a;white-space:pre;left:544.00px;transform:scaleX(0.8798);transform-origin:left center;">SB.NYSE,Monthly</span>
<div style="left:835px;top:41px;width:6px;height:1px;background:#c4c4c4;"></div>
<svg style="left:862px;top:35px;" width="7" height="7"><rect x="0.5" y="1" width="6" height="5.5" fill="none" stroke="#c4c4c4" stroke-width="1"/></svg>
<svg style="left:888.5px;top:34.9px;" width="7.6" height="7.6" viewBox="0 0 7.6 7.6"><path d="M.6 .6L7 7M7 .6L.6 7" stroke="#c4c4c4" stroke-width="0.9" fill="none"/></svg>
<svg style="left:526px;top:48px;" width="381" height="418"><rect x="0" y="0" width="380.5" height="417.5" fill="#000"/></svg>
<svg style="left:526px;top:49px;" width="349" height="402"><rect x="0" y="0.5" width="349" height="401.5" fill="#000092"/></svg>
<svg style="left:526px;top:49px;" width="349" height="2"><rect x="0" y="0" width="349" height="1.2" fill="#8c8cc4"/></svg>
<svg style="left:874px;top:49px;" width="2" height="403"><rect x="0.5" y="0.5" width="1.2" height="402" fill="#c8c8d8"/></svg>
<svg style="left:526px;top:451px;" width="350" height="2"><rect x="0" y="0" width="349.5" height="1.2" fill="#c8c8d8"/></svg>
<svg style="left:875px;top:68px;" width="3" height="2"><rect x="0" y="0.5" width="3" height="1" fill="#e8e8e8"/></svg>
<span style="top:63.60px;line-height:11px;height:11px;font-size:8.2px;color:#f2f2f2;white-space:pre;font-weight:700;left:878.30px;transform:scaleX(0.8780);transform-origin:left center;-webkit-text-stroke:0;">6.220</span>
<svg style="left:875px;top:92px;" width="3" height="2"><rect x="0" y="0.35" width="3" height="1" fill="#e8e8e8"/></svg>
<span style="top:87.45px;line-height:11px;height:11px;font-size:8.2px;color:#f2f2f2;white-space:pre;font-weight:700;left:878.30px;transform:scaleX(0.8780);transform-origin:left center;-webkit-text-stroke:0;">5.990</span>
<svg style="left:875px;top:116px;" width="3" height="2"><rect x="0" y="0.2" width="3" height="1" fill="#e8e8e8"/></svg>
<span style="top:111.30px;line-height:11px;height:11px;font-size:8.2px;color:#f2f2f2;white-space:pre;font-weight:700;left:878.30px;transform:scaleX(0.8780);transform-origin:left center;-webkit-text-stroke:0;">5.760</span>
<svg style="left:875px;top:140px;" width="3" height="2"><rect x="0" y="0.05" width="3" height="1" fill="#e8e8e8"/></svg>
<span style="top:135.15px;line-height:11px;height:11px;font-size:8.2px;color:#f2f2f2;white-space:pre;font-weight:700;left:878.30px;transform:scaleX(0.8780);transform-origin:left center;-webkit-text-stroke:0;">5.530</span>
<svg style="left:875px;top:163px;" width="3" height="2"><rect x="0" y="0.9" width="3" height="1" fill="#e8e8e8"/></svg>
<span style="top:159.00px;line-height:11px;height:11px;font-size:8.2px;color:#f2f2f2;white-space:pre;font-weight:700;left:878.30px;transform:scaleX(0.8780);transform-origin:left center;-webkit-text-stroke:0;">5.300</span>
<svg style="left:875px;top:187px;" width="3" height="2"><rect x="0" y="0.75" width="3" height="1" fill="#e8e8e8"/></svg>
<span style="top:182.85px;line-height:11px;height:11px;font-size:8.2px;color:#f2f2f2;white-space:pre;font-weight:700;left:878.30px;transform:scaleX(0.8780);transform-origin:left center;-webkit-text-stroke:0;">5.070</span>
<svg style="left:875px;top:211px;" width="3" height="2"><rect x="0" y="0.6" width="3" height="1" fill="#e8e8e8"/></svg>
<span style="top:206.70px;line-height:11px;height:11px;font-size:8.2px;color:#f2f2f2;white-space:pre;font-weight:700;left:878.30px;transform:scaleX(0.8780);transform-origin:left center;-webkit-text-stroke:0;">4.840</span>
<svg style="left:875px;top:235px;" width="3" height="2"><rect x="0" y="0.45" width="3" height="1" fill="#e8e8e8"/></svg>
<span style="top:230.55px;line-height:11px;height:11px;font-size:8.2px;color:#f2f2f2;white-space:pre;font-weight:700;left:878.30px;transform:scaleX(0.8780);transform-origin:left center;-webkit-text-stroke:0;">4.610</span>
<svg style="left:875px;top:259px;" width="3" height="2"><rect x="0" y="0.3" width="3" height="1" fill="#e8e8e8"/></svg>
<span style="top:254.40px;line-height:11px;height:11px;font-size:8.2px;color:#f2f2f2;white-space:pre;font-weight:700;left:878.30px;transform:scaleX(0.8780);transform-origin:left center;-webkit-text-stroke:0;">4.380</span>
<svg style="left:875px;top:283px;" width="3" height="2"><rect x="0" y="0.15" width="3" height="1" fill="#e8e8e8"/></svg>
<span style="top:278.25px;line-height:11px;height:11px;font-size:8.2px;color:#f2f2f2;white-space:pre;font-weight:700;left:878.30px;transform:scaleX(0.8780);transform-origin:left center;-webkit-text-stroke:0;">4.150</span>
<div style="left:875px;top:307px;width:3px;height:1px;background:#e8e8e8;"></div>
<span style="top:302.10px;line-height:11px;height:11px;font-size:8.2px;color:#f2f2f2;white-space:pre;font-weight:700;left:878.30px;transform:scaleX(0.8780);transform-origin:left center;-webkit-text-stroke:0;">3.920</span>
<svg style="left:875px;top:330px;" width="3" height="2"><rect x="0" y="0.85" width="3" height="1" fill="#e8e8e8"/></svg>
<span style="top:325.95px;line-height:11px;height:11px;font-size:8.2px;color:#f2f2f2;white-space:pre;font-weight:700;left:878.30px;transform:scaleX(0.8780);transform-origin:left center;-webkit-text-stroke:0;">3.690</span>
<svg style="left:875px;top:354px;" width="3" height="2"><rect x="0" y="0.7" width="3" height="1" fill="#e8e8e8"/></svg>
<span style="top:349.80px;line-height:11px;height:11px;font-size:8.2px;color:#f2f2f2;white-space:pre;font-weight:700;left:878.30px;transform:scaleX(0.8780);transform-origin:left center;-webkit-text-stroke:0;">3.460</span>
<svg style="left:875px;top:378px;" width="3" height="2"><rect x="0" y="0.55" width="3" height="1" fill="#e8e8e8"/></svg>
<span style="top:373.65px;line-height:11px;height:11px;font-size:8.2px;color:#f2f2f2;white-space:pre;font-weight:700;left:878.30px;transform:scaleX(0.8780);transform-origin:left center;-webkit-text-stroke:0;">3.230</span>
<svg style="left:875px;top:402px;" width="3" height="2"><rect x="0" y="0.4" width="3" height="1" fill="#e8e8e8"/></svg>
<span style="top:397.50px;line-height:11px;height:11px;font-size:8.2px;color:#f2f2f2;white-space:pre;font-weight:700;left:878.30px;transform:scaleX(0.8780);transform-origin:left center;-webkit-text-stroke:0;">3.000</span>
<svg style="left:875px;top:426px;" width="3" height="2"><rect x="0" y="0.25" width="3" height="1" fill="#e8e8e8"/></svg>
<span style="top:421.35px;line-height:11px;height:11px;font-size:8.2px;color:#f2f2f2;white-space:pre;font-weight:700;left:878.30px;transform:scaleX(0.8780);transform-origin:left center;-webkit-text-stroke:0;">2.770</span>
<svg style="left:877px;top:308px;" width="22" height="9"><rect x="0" y="0.8" width="22" height="7.8" fill="#8f959d"/></svg>
<span style="top:307.40px;line-height:11px;height:11px;font-size:8.2px;color:#56647c;white-space:pre;left:878.50px;transform:scaleX(0.8537);transform-origin:left center;-webkit-text-stroke:0;">3.870</span>
<span style="top:452.30px;line-height:11px;height:11px;font-size:8.2px;color:#f2f2f2;white-space:pre;font-weight:700;left:820.77px;transform:scaleX(0.8146);transform-origin:right center;-webkit-text-stroke:0;">ar 2025</span>
<svg style="left:906px;top:48px;" width="5" height="420"><rect x="0.5" y="0" width="4.5" height="420" fill="#f4f4f4"/></svg>
<svg style="left:906px;top:48px;" width="2" height="420"><rect x="0.5" y="0" width="1" height="420" fill="#bdbdbd"/></svg>
<div style="left:909px;top:48px;width:1px;height:420px;background:#fff;"></div>
<div style="left:911px;top:27px;width:1px;height:443px;background:#555;"></div>
<div style="left:912px;top:27px;width:112px;height:442px;background:#f0f0f0;"></div>
<div style="left:912px;top:28px;width:112px;height:1px;background:#fafafa;"></div>
<svg style="left:920px;top:32px;" width="10" height="11" viewBox="0 0 10 11" fill="none"><rect x=".9" y="2" width="2.8" height="6.6" rx=".3" stroke="#4cc45a" stroke-width="1"/><rect x="5.7" y="1.9" width="3.1" height="7.2" rx=".3" stroke="#4cc45a" stroke-width="1" fill="#c4f2ca"/><path d="M7.3 .3v1.7M7.3 9v1.7" stroke="#4cc45a" stroke-width=".9"/></svg>
<span style="top:31.60px;line-height:12px;height:12px;font-size:9.6px;color:#6a6a6a;white-space:pre;left:933.50px;transform:scaleX(0.8798);transform-origin:left center;">SB.NYSE,Monthly</span>
<svg style="left:916px;top:48px;" width="108" height="418"><rect x="0" y="0" width="108" height="417.5" fill="#1a1a3a"/></svg>
<svg style="left:917px;top:49px;" width="107" height="417"><rect x="0" y="0" width="107" height="416.5" fill="#000092"/></svg>
<svg style="left:917px;top:48px;" width="107" height="2"><rect x="0" y="0.8" width="107" height="1.2" fill="#8c8cc4"/></svg>
<svg style="left:916px;top:48px;" width="2" height="418"><rect x="0.6" y="0.8" width="1.4" height="416.7" fill="#c4c4e4"/></svg>
<svg style="left:917px;top:451px;" width="108" height="2"><rect x="0.5" y="0" width="107" height="1.2" fill="#c8c8d8"/></svg>
<svg style="left:920.8px;top:53.9px;" width="11" height="8" viewBox="0 0 11 8"><rect width="11" height="8" fill="#f4ded8"/><rect x="0" y="0" width="11" height="1" fill="#e8a090"/><rect x="1" y="2" width="3" height="1.2" fill="#d8604a"/><rect x="1" y="4" width="3" height="1.2" fill="#d8604a"/><rect x="1" y="6" width="3" height="1.2" fill="#d8604a"/><rect x="5" y="2" width="5" height="1.2" fill="#5a90d8"/><rect x="5" y="4" width="5" height="1.2" fill="#5a90d8"/><rect x="5" y="6" width="5" height="1.2" fill="#5a90d8"/></svg>
<svg style="left:936.8px;top:53.9px;" width="11" height="8" viewBox="0 0 11 8"><rect x="0" y="0" width="4" height="8" fill="#f2c9bc"/><rect x="4" y="0" width="3.4" height="3" fill="#fff"/><rect x="5" y="3" width="1.6" height="5" fill="#111"/><rect x="7.4" y="1.5" width="3.4" height="6.5" fill="#a8d4f5"/><rect x="4" y="0" width="7" height="1" fill="#fff"/></svg>
<span style="top:52.60px;line-height:11px;height:11px;font-size:8.3px;color:#f4f4f4;white-space:pre;font-weight:700;left:952.00px;transform:scaleX(0.8473);transform-origin:left center;-webkit-text-stroke:0;">SB.NYSE, Monthly:  S-</span>
<span style="top:64.40px;line-height:10px;height:10px;font-size:8px;color:#f4f4f4;white-space:pre;font-weight:700;left:920.50px;transform:scaleX(0.8248);transform-origin:left center;-webkit-text-stroke:0;">Stats update started: 2025.06.12 0</span>
<span style="top:72.80px;line-height:10px;height:10px;font-size:8px;color:#f4f4f4;white-space:pre;font-weight:700;left:920.50px;transform:scaleX(0.8265);transform-origin:left center;-webkit-text-stroke:0;">Stats update finished: 2025.06.12</span>
<div style="left:917px;top:452px;width:1px;height:3px;background:#ddd;"></div>
<div style="left:965px;top:452px;width:1px;height:3px;background:#ddd;"></div>
<div style="left:1013px;top:452px;width:1px;height:3px;background:#ddd;"></div>
<span style="top:452.30px;line-height:11px;height:11px;font-size:8.2px;color:#f2f2f2;white-space:pre;font-weight:700;left:918.00px;transform:scaleX(0.8116);transform-origin:left center;-webkit-text-stroke:0;">1 Mar 2023</span>
<span style="top:452.30px;line-height:11px;height:11px;font-size:8.2px;color:#f2f2f2;white-space:pre;font-weight:700;left:966.00px;transform:scaleX(0.7789);transform-origin:left center;-webkit-text-stroke:0;">1 Jul 2023</span>
<span style="top:452.30px;line-height:11px;height:11px;font-size:8.2px;color:#f2f2f2;white-space:pre;font-weight:700;left:1014.00px;transform:scaleX(0.7624);transform-origin:left center;-webkit-text-stroke:0;">1 Nov</span>
<svg style="left:133px;top:465px;" width="891" height="24"><rect x="0" y="0.5" width="891" height="23" fill="#f0f0f0"/></svg>
<svg style="left:134px;top:467px;" width="890" height="2"><rect x="0" y="0.3" width="890" height="1" fill="#fbfbfb"/></svg>
<svg style="left:133px;top:470px;" width="891" height="2"><rect x="0.5" y="0.4" width="890.5" height="1.1" fill="#5a5a5a"/></svg>
<div style="left:136.2px;top:470.4px;width:71.6px;height:14.4px;background:#fff;border:1.3px solid #3a3a3a;border-top:none;"></div>
<span style="top:472.00px;line-height:12px;height:12px;font-size:9.5px;color:#222;white-space:pre;left:141.65px;transform:scaleX(0.8896);transform-origin:center center;">NZDCAD,M15</span>
<span style="top:472.30px;line-height:12px;height:12px;font-size:9.5px;color:#8c8c8c;white-space:pre;left:218.00px;transform:scaleX(0.8950);transform-origin:left center;">SB.NYSE,Monthly</span>
<div style="left:295px;top:473px;width:1px;height:10px;background:#999;"></div>
<span style="top:472.30px;line-height:12px;height:12px;font-size:9.5px;color:#8c8c8c;white-space:pre;left:304.50px;transform:scaleX(0.8950);transform-origin:left center;">SB.NYSE,Monthly</span>
<svg style="left:0px;top:488px;" width="1024" height="2"><rect x="0" y="0.4" width="1024" height="1.1" fill="#d0d0d0"/></svg>
<svg style="left:0px;top:489px;" width="1024" height="64"><rect x="0" y="0.5" width="1024" height="63" fill="#fff"/></svg>
<svg style="left:0px;top:522px;" width="1024" height="16"><rect x="0" y="0.5" width="1024" height="15" fill="#eeeeee"/></svg>
<div style="left:0px;top:522px;width:1024px;height:1px;background:#e2e2e2;"></div>
<svg style="left:0px;top:537px;" width="1024" height="2"><rect x="0" y="0.2" width="1024" height="1" fill="#e2e2e2"/></svg>
<svg style="left:0px;top:552px;" width="1024" height="16"><rect x="0" y="0.5" width="1024" height="15" fill="#c8c8c8"/></svg>
<svg style="left:0px;top:567px;" width="1024" height="10"><rect x="0" y="0.5" width="1024" height="9" fill="#fff"/></svg>
<svg style="left:104px;top:489px;" width="1" height="64"><rect x="0" y="0.5" width="1" height="63" fill="#e6e6e6"/></svg>
<svg style="left:186px;top:489px;" width="1" height="64"><rect x="0" y="0.5" width="1" height="63" fill="#e6e6e6"/></svg>
<svg style="left:255px;top:489px;" width="1" height="64"><rect x="0" y="0.5" width="1" height="63" fill="#e6e6e6"/></svg>
<svg style="left:370px;top:489px;" width="1" height="64"><rect x="0" y="0.5" width="1" height="63" fill="#e6e6e6"/></svg>
<svg style="left:489px;top:489px;" width="1" height="64"><rect x="0" y="0.5" width="1" height="63" fill="#e6e6e6"/></svg>
<svg style="left:602px;top:489px;" width="1" height="64"><rect x="0" y="0.5" width="1" height="63" fill="#e6e6e6"/></svg>
<svg style="left:718px;top:489px;" width="1" height="64"><rect x="0" y="0.5" width="1" height="63" fill="#e6e6e6"/></svg>
<svg style="left:822px;top:489px;" width="1" height="64"><rect x="0" y="0.5" width="1" height="63" fill="#e6e6e6"/></svg>
<svg style="left:938px;top:489px;" width="1" height="64"><rect x="0" y="0.5" width="1" height="63" fill="#e6e6e6"/></svg>
<span style="top:492.50px;line-height:12px;height:12px;font-size:9.5px;color:#333;white-space:pre;left:69.31px;transform:scaleX(0.9625);transform-origin:right center;">Symbol</span>
<span style="top:492.50px;line-height:12px;height:12px;font-size:9.5px;color:#333;white-space:pre;left:157.02px;transform:scaleX(0.9406);transform-origin:right center;">Ticket</span>
<span style="top:492.50px;line-height:12px;height:12px;font-size:9.5px;color:#333;white-space:pre;left:230.39px;transform:scaleX(0.9219);transform-origin:right center;">Type</span>
<span style="top:492.50px;line-height:12px;height:12px;font-size:9.5px;color:#333;white-space:pre;left:335.81px;transform:scaleX(0.9625);transform-origin:right center;">Volume</span>
<span style="top:492.50px;line-height:12px;height:12px;font-size:9.5px;color:#333;white-space:pre;left:912.84px;transform:scaleX(0.9466);transform-origin:right center;">Price</span>
<span style="top:509.20px;line-height:12px;height:12px;font-size:9.3px;color:#444;white-space:pre;left:132.18px;transform:scaleX(0.8586);transform-origin:right center;">1104304826</span>
<span style="top:509.20px;line-height:12px;height:12px;font-size:9.3px;color:#444;white-space:pre;left:219.92px;transform:scaleX(0.9147);transform-origin:right center;">balance</span>
<span style="top:509.20px;line-height:12px;height:12px;font-size:9.3px;color:#444;white-space:pre;left:258.50px;transform:scaleX(0.8980);transform-origin:left center;">ZeroCap-FSA 74880626</span>
<span style="top:524.30px;line-height:12px;height:12px;font-size:9.3px;color:#444;white-space:pre;left:71.52px;transform:scaleX(0.9171);transform-origin:right center;">nzdcad</span>
<span style="top:524.30px;line-height:12px;height:12px;font-size:9.3px;color:#444;white-space:pre;left:132.18px;transform:scaleX(0.8586);transform-origin:right center;">1175122086</span>
<span style="top:524.30px;line-height:12px;height:12px;font-size:9.3px;color:#444;white-space:pre;left:237.00px;transform:scaleX(0.9667);transform-origin:right center;">buy</span>
<span style="top:524.30px;line-height:12px;height:12px;font-size:9.3px;color:#444;white-space:pre;left:349.39px;transform:scaleX(0.8559);transform-origin:right center;">0.01</span>
<span style="top:524.30px;line-height:12px;height:12px;font-size:9.3px;color:#444;white-space:pre;left:450.89px;transform:scaleX(0.9075);transform-origin:right center;">0.82548</span>
<span style="top:524.30px;line-height:12px;height:12px;font-size:9.3px;color:#444;white-space:pre;left:735.88px;transform:scaleX(0.8863);transform-origin:right center;">2025.06.11 15:45:00</span>
<span style="top:524.30px;line-height:12px;height:12px;font-size:9.3px;color:#444;white-space:pre;left:903.39px;transform:scaleX(0.9075);transform-origin:right center;">0.82740</span>
<span style="top:539.60px;line-height:12px;height:12px;font-size:9.3px;color:#444;white-space:pre;left:71.52px;transform:scaleX(0.9171);transform-origin:right center;">nzdcad</span>
<span style="top:539.60px;line-height:12px;height:12px;font-size:9.3px;color:#444;white-space:pre;left:132.18px;transform:scaleX(0.8586);transform-origin:right center;">1176019792</span>
<span style="top:539.60px;line-height:12px;height:12px;font-size:9.3px;color:#444;white-space:pre;left:237.00px;transform:scaleX(0.9667);transform-origin:right center;">buy</span>
<span style="top:539.60px;line-height:12px;height:12px;font-size:9.3px;color:#444;white-space:pre;left:349.39px;transform:scaleX(0.8559);transform-origin:right center;">0.01</span>
<span style="top:539.60px;line-height:12px;height:12px;font-size:9.3px;color:#444;white-space:pre;left:450.89px;transform:scaleX(0.9075);transform-origin:right center;">0.82129</span>
<span style="top:539.60px;line-height:12px;height:12px;font-size:9.3px;color:#444;white-space:pre;left:735.88px;transform:scaleX(0.8863);transform-origin:right center;">2025.06.12 11:15:00</span>
<span style="top:539.60px;line-height:12px;height:12px;font-size:9.3px;color:#444;white-space:pre;left:903.39px;transform:scaleX(0.9075);transform-origin:right center;">0.82279</span>
<span style="top:554.20px;line-height:12px;height:12px;font-size:9.3px;color:#222;white-space:pre;font-weight:700;left:0.50px;transform:scaleX(0.9384);transform-origin:left center;">Deposit: 1 001.00  Withdrawal: 0.00  Balance: 1 003.51</span>
<div style="left:368px;top:49px;width:458.5px;height:469.5px;box-shadow:0 1px 7px 1px rgba(0,0,0,.45);background:#f0f0f0;"></div>
<svg style="left:368px;top:48px;" width="459" height="2"><rect x="0" y="0" width="458.5" height="1.5" fill="#3c3c3c"/></svg>
<svg style="left:368px;top:49px;" width="459" height="23"><rect x="0" y="0.5" width="458.5" height="22.4" fill="#fff"/></svg>
<svg style="left:368px;top:49px;" width="1" height="470"><rect x="0" y="0.5" width="1" height="469" fill="#9a9a9a"/></svg>
<svg style="left:825px;top:49px;" width="2" height="470"><rect x="0.5" y="0.5" width="1" height="469" fill="#9a9a9a"/></svg>
<svg style="left:368px;top:517px;" width="459" height="2"><rect x="0" y="0.5" width="458.5" height="1" fill="#8a8a8a"/></svg>
<span style="top:54.70px;line-height:12px;height:12px;font-size:9.6px;color:#222;white-space:pre;left:374.50px;transform:scaleX(0.8808);transform-origin:left center;">Dark Nova Plus 1.00</span>
<svg style="left:737px;top:60px;" width="8" height="2"><rect x="0" y="0.2" width="7.6" height="1" fill="#333"/></svg>
<div style="left:771px;top:57px;width:7px;height:7px;border:1px solid #c8c8c8;"></div>
<svg style="left:805px;top:56.5px;" width="8" height="8" viewBox="0 0 8 8"><path d="M.6 .6L7.4 7.4M7.4 .6L.6 7.4" stroke="#222" stroke-width="1" fill="none"/></svg>
<svg style="left:374px;top:92px;" width="447" height="398"><rect x="0.5" y="1" width="445.5" height="396" fill="#fff" stroke="#dcdcdc" stroke-width="1"/></svg>
<div style="left:374px;top:79.5px;width:40px;height:13.5px;background:#f0f0f0;border:1px solid #dcdcdc;border-bottom:none;"></div>
<div style="left:447px;top:79.5px;width:56.5px;height:13.5px;background:#f0f0f0;border:1px solid #dcdcdc;border-bottom:none;"></div>
<div style="left:413px;top:77.5px;width:34.5px;height:16px;background:#fff;border:1px solid #dcdcdc;border-bottom:none;"></div>
<span style="top:80.80px;line-height:11px;height:11px;font-size:8.8px;color:#222;white-space:pre;left:378.50px;transform:scaleX(0.8546);transform-origin:left center;">Common</span>
<span style="top:79.70px;line-height:11px;height:11px;font-size:8.8px;color:#222;white-space:pre;left:418.30px;transform:scaleX(0.9596);transform-origin:left center;">Inputs</span>
<span style="top:80.80px;line-height:11px;height:11px;font-size:8.8px;color:#222;white-space:pre;left:450.00px;transform:scaleX(0.8889);transform-origin:left center;">Dependencies</span>
<div style="left:382px;top:100px;width:347px;height:380px;background:#fff;border:1px solid #93979e;"></div>
<div style="left:548px;top:101px;width:1px;height:378px;background:#e0e0e0;"></div>
<span style="top:104.70px;line-height:11px;height:11px;font-size:8.8px;color:#333;white-space:pre;left:387.50px;transform:scaleX(0.8854);transform-origin:left center;">Variable</span>
<span style="top:104.70px;line-height:11px;height:11px;font-size:8.8px;color:#333;white-space:pre;left:553.50px;transform:scaleX(0.8463);transform-origin:left center;">Value</span>
<div style="left:715px;top:101px;width:13px;height:378px;background:#f0f0f0;"></div>
<div style="left:716px;top:301px;width:11px;height:79px;background:#cdcdcd;"></div>
<svg style="left:717.5px;top:105px;" width="8" height="6" viewBox="0 0 8 6"><path d="M1 4.6L4 1.6L7 4.6" stroke="#444" stroke-width="1.3" fill="none"/></svg>
<svg style="left:717.5px;top:469px;" width="8" height="6" viewBox="0 0 8 6"><path d="M1 1.4L4 4.4L7 1.4" stroke="#444" stroke-width="1.3" fill="none"/></svg>
<svg style="left:383px;top:119px;" width="332" height="15"><rect x="0" y="0" width="332" height="14.935" fill="#ebebeb"/></svg>
<svg style="left:383px;top:133px;" width="332" height="2"><rect x="0" y="0.435" width="332" height="1" fill="#dadada"/></svg>
<svg style="left:548px;top:119px;" width="1" height="15"><rect x="0" y="0" width="1" height="14.935" fill="#d4d4d4"/></svg>
<svg style="left:386px;top:122.968px;" width="10" height="7" viewBox="0 0 10 7"><circle cx="2.5" cy="3.6" r="1.9" stroke="#3a86c8" stroke-width="1" fill="none"/><path d="M6 2.4l1.6-1.2v5.4" stroke="#3a86c8" stroke-width="1" fill="none"/></svg>
<span style="top:121.47px;line-height:11px;height:11px;font-size:8.8px;color:#222;white-space:pre;left:398.50px;transform:scaleX(0.9209);transform-origin:left center;">Trading stop hour</span>
<span style="top:121.47px;line-height:11px;height:11px;font-size:8.8px;color:#222;white-space:pre;left:551.50px;transform:scaleX(0.8561);transform-origin:left center;">0</span>
<svg style="left:383px;top:148px;" width="332" height="2"><rect x="0" y="0.37" width="332" height="1" fill="#dadada"/></svg>
<svg style="left:548px;top:133px;" width="1" height="16"><rect x="0" y="0.935" width="1" height="14.935" fill="#d4d4d4"/></svg>
<svg style="left:386px;top:137.903px;" width="10" height="7" viewBox="0 0 10 7"><circle cx="2.5" cy="3.6" r="1.9" stroke="#3a86c8" stroke-width="1" fill="none"/><path d="M6 2.4l1.6-1.2v5.4" stroke="#3a86c8" stroke-width="1" fill="none"/></svg>
<span style="top:136.40px;line-height:11px;height:11px;font-size:8.8px;color:#222;white-space:pre;left:398.50px;transform:scaleX(0.9138);transform-origin:left center;">Trading stop minute</span>
<span style="top:136.40px;line-height:11px;height:11px;font-size:8.8px;color:#222;white-space:pre;left:551.50px;transform:scaleX(0.8561);transform-origin:left center;">0</span>
<svg style="left:383px;top:148px;" width="332" height="16"><rect x="0" y="0.87" width="332" height="14.935" fill="#ebebeb"/></svg>
<svg style="left:383px;top:163px;" width="332" height="2"><rect x="0" y="0.305" width="332" height="1" fill="#dadada"/></svg>
<svg style="left:548px;top:148px;" width="1" height="16"><rect x="0" y="0.87" width="1" height="14.935" fill="#d4d4d4"/></svg>
<svg style="left:385.6px;top:150.738px;" width="11" height="10" viewBox="0 0 11 10"><path d="M3 9.3V1.2M.8 3.3L3 .9 5.2 3.3" stroke="#3cae4c" stroke-width=".95" fill="none"/><path d="M3.1 6.8C3.6 4.8 5 4.2 9.2 4.2M7.3 2.3L9.5 4.2 7.3 6.1" stroke="#3cae4c" stroke-width=".95" fill="none"/></svg>
<span style="top:151.34px;line-height:11px;height:11px;font-size:8.8px;color:#222;white-space:pre;left:398.50px;transform:scaleX(0.9451);transform-origin:left center;">Close everything outside of trading ho...</span>
<span style="top:151.34px;line-height:11px;height:11px;font-size:8.8px;color:#222;white-space:pre;left:551.50px;transform:scaleX(0.8874);transform-origin:left center;">false</span>
<svg style="left:383px;top:178px;" width="332" height="2"><rect x="0" y="0.24" width="332" height="1" fill="#dadada"/></svg>
<svg style="left:548px;top:163px;" width="1" height="16"><rect x="0" y="0.805" width="1" height="14.935" fill="#d4d4d4"/></svg>
<span style="top:165.47px;line-height:11px;height:11px;font-size:8.6px;color:#c9a227;white-space:pre;left:386.00px;transform:scaleX(0.8889);transform-origin:left center;">ab</span>
<div style="left:399px;top:171.573px;width:137px;height:1px;background:repeating-linear-gradient(to right,#555 0 2.2px,#bbb 2.2px 3.4px);"></div>
<span style="top:165.77px;line-height:11px;height:11px;font-size:8.6px;color:#333;white-space:pre;left:537.00px;transform:scaleX(1.1155);transform-origin:left center;">...</span>
<div style="left:552px;top:171.573px;width:150px;height:1px;background:repeating-linear-gradient(to right,#555 0 2.2px,#bbb 2.2px 3.4px);"></div>
<span style="top:165.77px;line-height:11px;height:11px;font-size:8.6px;color:#333;white-space:pre;left:702.00px;transform:scaleX(1.1155);transform-origin:left center;">...</span>
<svg style="left:383px;top:178px;" width="332" height="16"><rect x="0" y="0.74" width="332" height="14.935" fill="#ebebeb"/></svg>
<svg style="left:383px;top:193px;" width="332" height="2"><rect x="0" y="0.175" width="332" height="1" fill="#dadada"/></svg>
<svg style="left:548px;top:178px;" width="1" height="16"><rect x="0" y="0.74" width="1" height="14.935" fill="#d4d4d4"/></svg>
<span style="top:180.41px;line-height:11px;height:11px;font-size:8.6px;color:#c9a227;white-space:pre;left:386.00px;transform:scaleX(0.8889);transform-origin:left center;">ab</span>
<span style="top:181.21px;line-height:11px;height:11px;font-size:8.8px;color:#222;white-space:pre;left:398.50px;transform:scaleX(0.8455);transform-origin:left center;">TRADING DAYS</span>
<span style="top:181.21px;line-height:11px;height:11px;font-size:8.8px;color:#222;white-space:pre;left:551.50px;transform:scaleX(0.8417);transform-origin:left center;">TRADING DAYS</span>
<svg style="left:383px;top:208px;" width="332" height="2"><rect x="0" y="0.11" width="332" height="1" fill="#dadada"/></svg>
<svg style="left:548px;top:193px;" width="1" height="16"><rect x="0" y="0.675" width="1" height="14.935" fill="#d4d4d4"/></svg>
<svg style="left:385.6px;top:195.543px;" width="11" height="10" viewBox="0 0 11 10"><path d="M3 9.3V1.2M.8 3.3L3 .9 5.2 3.3" stroke="#3cae4c" stroke-width=".95" fill="none"/><path d="M3.1 6.8C3.6 4.8 5 4.2 9.2 4.2M7.3 2.3L9.5 4.2 7.3 6.1" stroke="#3cae4c" stroke-width=".95" fill="none"/></svg>
<span style="top:196.14px;line-height:11px;height:11px;font-size:8.8px;color:#222;white-space:pre;left:398.50px;transform:scaleX(0.9106);transform-origin:left center;">Monday</span>
<span style="top:196.14px;line-height:11px;height:11px;font-size:8.8px;color:#222;white-space:pre;left:551.50px;transform:scaleX(0.9557);transform-origin:left center;">true</span>
<svg style="left:383px;top:208px;" width="332" height="16"><rect x="0" y="0.61" width="332" height="14.935" fill="#ebebeb"/></svg>
<svg style="left:383px;top:223px;" width="332" height="2"><rect x="0" y="0.045" width="332" height="1" fill="#dadada"/></svg>
<svg style="left:548px;top:208px;" width="1" height="16"><rect x="0" y="0.61" width="1" height="14.935" fill="#d4d4d4"/></svg>
<svg style="left:385.6px;top:210.478px;" width="11" height="10" viewBox="0 0 11 10"><path d="M3 9.3V1.2M.8 3.3L3 .9 5.2 3.3" stroke="#3cae4c" stroke-width=".95" fill="none"/><path d="M3.1 6.8C3.6 4.8 5 4.2 9.2 4.2M7.3 2.3L9.5 4.2 7.3 6.1" stroke="#3cae4c" stroke-width=".95" fill="none"/></svg>
<span style="top:211.08px;line-height:11px;height:11px;font-size:8.8px;color:#222;white-space:pre;left:398.50px;transform:scaleX(0.9126);transform-origin:left center;">Tuesday</span>
<span style="top:211.08px;line-height:11px;height:11px;font-size:8.8px;color:#222;white-space:pre;left:551.50px;transform:scaleX(0.9557);transform-origin:left center;">true</span>
<svg style="left:383px;top:237px;" width="332" height="2"><rect x="0" y="0.98" width="332" height="1" fill="#dadada"/></svg>
<svg style="left:548px;top:223px;" width="1" height="16"><rect x="0" y="0.545" width="1" height="14.935" fill="#d4d4d4"/></svg>
<svg style="left:385.6px;top:225.413px;" width="11" height="10" viewBox="0 0 11 10"><path d="M3 9.3V1.2M.8 3.3L3 .9 5.2 3.3" stroke="#3cae4c" stroke-width=".95" fill="none"/><path d="M3.1 6.8C3.6 4.8 5 4.2 9.2 4.2M7.3 2.3L9.5 4.2 7.3 6.1" stroke="#3cae4c" stroke-width=".95" fill="none"/></svg>
<span style="top:226.01px;line-height:11px;height:11px;font-size:8.8px;color:#222;white-space:pre;left:398.50px;transform:scaleX(0.9180);transform-origin:left center;">Wednesday</span>
<span style="top:226.01px;line-height:11px;height:11px;font-size:8.8px;color:#222;white-space:pre;left:551.50px;transform:scaleX(0.9557);transform-origin:left center;">true</span>
<svg style="left:383px;top:238px;" width="332" height="16"><rect x="0" y="0.48" width="332" height="14.935" fill="#ebebeb"/></svg>
<svg style="left:383px;top:252px;" width="332" height="2"><rect x="0" y="0.915" width="332" height="1" fill="#dadada"/></svg>
<svg style="left:548px;top:238px;" width="1" height="16"><rect x="0" y="0.48" width="1" height="14.935" fill="#d4d4d4"/></svg>
<svg style="left:385.6px;top:240.348px;" width="11" height="10" viewBox="0 0 11 10"><path d="M3 9.3V1.2M.8 3.3L3 .9 5.2 3.3" stroke="#3cae4c" stroke-width=".95" fill="none"/><path d="M3.1 6.8C3.6 4.8 5 4.2 9.2 4.2M7.3 2.3L9.5 4.2 7.3 6.1" stroke="#3cae4c" stroke-width=".95" fill="none"/></svg>
<span style="top:240.95px;line-height:11px;height:11px;font-size:8.8px;color:#222;white-space:pre;left:398.50px;transform:scaleX(0.9135);transform-origin:left center;">Thursday</span>
<span style="top:240.95px;line-height:11px;height:11px;font-size:8.8px;color:#222;white-space:pre;left:551.50px;transform:scaleX(0.9557);transform-origin:left center;">true</span>
<svg style="left:383px;top:267px;" width="332" height="2"><rect x="0" y="0.85" width="332" height="1" fill="#dadada"/></svg>
<svg style="left:548px;top:253px;" width="1" height="16"><rect x="0" y="0.415" width="1" height="14.935" fill="#d4d4d4"/></svg>
<svg style="left:385.6px;top:255.282px;" width="11" height="10" viewBox="0 0 11 10"><path d="M3 9.3V1.2M.8 3.3L3 .9 5.2 3.3" stroke="#3cae4c" stroke-width=".95" fill="none"/><path d="M3.1 6.8C3.6 4.8 5 4.2 9.2 4.2M7.3 2.3L9.5 4.2 7.3 6.1" stroke="#3cae4c" stroke-width=".95" fill="none"/></svg>
<span style="top:255.88px;line-height:11px;height:11px;font-size:8.8px;color:#222;white-space:pre;left:398.50px;transform:scaleX(0.9201);transform-origin:left center;">Friday</span>
<span style="top:255.88px;line-height:11px;height:11px;font-size:8.8px;color:#222;white-space:pre;left:551.50px;transform:scaleX(0.9557);transform-origin:left center;">true</span>
<svg style="left:383px;top:268px;" width="332" height="16"><rect x="0" y="0.35" width="332" height="14.935" fill="#ebebeb"/></svg>
<svg style="left:383px;top:282px;" width="332" height="2"><rect x="0" y="0.785" width="332" height="1" fill="#dadada"/></svg>
<svg style="left:548px;top:268px;" width="1" height="16"><rect x="0" y="0.35" width="1" height="14.935" fill="#d4d4d4"/></svg>
<svg style="left:385.6px;top:270.217px;" width="11" height="10" viewBox="0 0 11 10"><path d="M3 9.3V1.2M.8 3.3L3 .9 5.2 3.3" stroke="#3cae4c" stroke-width=".95" fill="none"/><path d="M3.1 6.8C3.6 4.8 5 4.2 9.2 4.2M7.3 2.3L9.5 4.2 7.3 6.1" stroke="#3cae4c" stroke-width=".95" fill="none"/></svg>
<span style="top:270.82px;line-height:11px;height:11px;font-size:8.8px;color:#222;white-space:pre;left:398.50px;transform:scaleX(0.9228);transform-origin:left center;">Saturday</span>
<span style="top:270.82px;line-height:11px;height:11px;font-size:8.8px;color:#222;white-space:pre;left:551.50px;transform:scaleX(0.9557);transform-origin:left center;">true</span>
<svg style="left:383px;top:297px;" width="332" height="2"><rect x="0" y="0.72" width="332" height="1" fill="#dadada"/></svg>
<svg style="left:548px;top:283px;" width="1" height="16"><rect x="0" y="0.285" width="1" height="14.935" fill="#d4d4d4"/></svg>
<svg style="left:385.6px;top:285.152px;" width="11" height="10" viewBox="0 0 11 10"><path d="M3 9.3V1.2M.8 3.3L3 .9 5.2 3.3" stroke="#3cae4c" stroke-width=".95" fill="none"/><path d="M3.1 6.8C3.6 4.8 5 4.2 9.2 4.2M7.3 2.3L9.5 4.2 7.3 6.1" stroke="#3cae4c" stroke-width=".95" fill="none"/></svg>
<span style="top:285.75px;line-height:11px;height:11px;font-size:8.8px;color:#222;white-space:pre;left:398.50px;transform:scaleX(0.9047);transform-origin:left center;">Sunday</span>
<span style="top:285.75px;line-height:11px;height:11px;font-size:8.8px;color:#222;white-space:pre;left:551.50px;transform:scaleX(0.9557);transform-origin:left center;">true</span>
<svg style="left:383px;top:298px;" width="332" height="16"><rect x="0" y="0.22" width="332" height="14.935" fill="#ebebeb"/></svg>
<svg style="left:383px;top:312px;" width="332" height="2"><rect x="0" y="0.655" width="332" height="1" fill="#dadada"/></svg>
<svg style="left:548px;top:298px;" width="1" height="16"><rect x="0" y="0.22" width="1" height="14.935" fill="#d4d4d4"/></svg>
<span style="top:299.89px;line-height:11px;height:11px;font-size:8.6px;color:#c9a227;white-space:pre;left:386.00px;transform:scaleX(0.8889);transform-origin:left center;">ab</span>
<div style="left:399px;top:305.988px;width:137px;height:1px;background:repeating-linear-gradient(to right,#555 0 2.2px,#bbb 2.2px 3.4px);"></div>
<span style="top:300.19px;line-height:11px;height:11px;font-size:8.6px;color:#333;white-space:pre;left:537.00px;transform:scaleX(1.1155);transform-origin:left center;">...</span>
<div style="left:552px;top:305.988px;width:150px;height:1px;background:repeating-linear-gradient(to right,#555 0 2.2px,#bbb 2.2px 3.4px);"></div>
<span style="top:300.19px;line-height:11px;height:11px;font-size:8.6px;color:#333;white-space:pre;left:702.00px;transform:scaleX(1.1155);transform-origin:left center;">...</span>
<svg style="left:383px;top:327px;" width="332" height="2"><rect x="0" y="0.59" width="332" height="1" fill="#dadada"/></svg>
<svg style="left:548px;top:313px;" width="1" height="16"><rect x="0" y="0.155" width="1" height="14.935" fill="#d4d4d4"/></svg>
<span style="top:314.82px;line-height:11px;height:11px;font-size:8.6px;color:#c9a227;white-space:pre;left:386.00px;transform:scaleX(0.8889);transform-origin:left center;">ab</span>
<span style="top:315.62px;line-height:11px;height:11px;font-size:8.8px;color:#222;white-space:pre;left:398.50px;transform:scaleX(0.8197);transform-origin:left center;">TRADE SETTINGS</span>
<span style="top:315.62px;line-height:11px;height:11px;font-size:8.8px;color:#222;white-space:pre;left:551.50px;transform:scaleX(0.8416);transform-origin:left center;">STANDARD TRADING SETTINGS</span>
<svg style="left:383px;top:342px;" width="332" height="2"><rect x="0" y="0.525" width="332" height="1" fill="#dadada"/></svg>
<svg style="left:383px;top:327px;" width="332" height="16"><rect x="1.1" y="1.99" width="329.6" height="12.535" fill="#0078d7" stroke="#be2136" stroke-width="2.2"/></svg>
<svg style="left:385.6px;top:329.957px;" width="11" height="10" viewBox="0 0 11 10"><path d="M3 9.3V1.2M.8 3.3L3 .9 5.2 3.3" stroke="#2c9080" stroke-width=".95" fill="none"/><path d="M3.1 6.8C3.6 4.8 5 4.2 9.2 4.2M7.3 2.3L9.5 4.2 7.3 6.1" stroke="#2c9080" stroke-width=".95" fill="none"/></svg>
<span style="top:330.56px;line-height:11px;height:11px;font-size:8.8px;color:#fff;white-space:pre;left:398.50px;transform:scaleX(0.8716);transform-origin:left center;">Enable Grid</span>
<span style="top:330.56px;line-height:11px;height:11px;font-size:8.8px;color:#fff;white-space:pre;left:551.50px;transform:scaleX(0.9557);transform-origin:left center;">true</span>
<svg style="left:383px;top:357px;" width="332" height="2"><rect x="0" y="0.46" width="332" height="1" fill="#dadada"/></svg>
<svg style="left:548px;top:343px;" width="1" height="15"><rect x="0" y="0.025" width="1" height="14.935" fill="#d4d4d4"/></svg>
<svg style="left:385.6px;top:344.892px;" width="11" height="10" viewBox="0 0 11 10"><path d="M3 9.3V1.2M.8 3.3L3 .9 5.2 3.3" stroke="#3cae4c" stroke-width=".95" fill="none"/><path d="M3.1 6.8C3.6 4.8 5 4.2 9.2 4.2M7.3 2.3L9.5 4.2 7.3 6.1" stroke="#3cae4c" stroke-width=".95" fill="none"/></svg>
<span style="top:345.49px;line-height:11px;height:11px;font-size:8.8px;color:#222;white-space:pre;left:398.50px;transform:scaleX(0.9014);transform-origin:left center;">Grid Orders Comply Max Spread Condi...</span>
<span style="top:345.49px;line-height:11px;height:11px;font-size:8.8px;color:#222;white-space:pre;left:551.50px;transform:scaleX(0.9557);transform-origin:left center;">true</span>
<svg style="left:383px;top:357px;" width="332" height="16"><rect x="0" y="0.96" width="332" height="14.935" fill="#ebebeb"/></svg>
<svg style="left:383px;top:372px;" width="332" height="2"><rect x="0" y="0.395" width="332" height="1" fill="#dadada"/></svg>
<svg style="left:548px;top:357px;" width="1" height="16"><rect x="0" y="0.96" width="1" height="14.935" fill="#d4d4d4"/></svg>
<svg style="left:385.6px;top:359.827px;" width="11" height="10" viewBox="0 0 11 10"><path d="M3 9.3V1.2M.8 3.3L3 .9 5.2 3.3" stroke="#3cae4c" stroke-width=".95" fill="none"/><path d="M3.1 6.8C3.6 4.8 5 4.2 9.2 4.2M7.3 2.3L9.5 4.2 7.3 6.1" stroke="#3cae4c" stroke-width=".95" fill="none"/></svg>
<span style="top:360.43px;line-height:11px;height:11px;font-size:8.8px;color:#222;white-space:pre;left:398.50px;transform:scaleX(0.9060);transform-origin:left center;">Grid Orders Comply Indicators Conditions</span>
<span style="top:360.43px;line-height:11px;height:11px;font-size:8.8px;color:#222;white-space:pre;left:551.50px;transform:scaleX(0.8874);transform-origin:left center;">false</span>
<svg style="left:383px;top:387px;" width="332" height="2"><rect x="0" y="0.33" width="332" height="1" fill="#dadada"/></svg>
<svg style="left:548px;top:372px;" width="1" height="16"><rect x="0" y="0.895" width="1" height="14.935" fill="#d4d4d4"/></svg>
<svg style="left:385.6px;top:374.762px;" width="11" height="10" viewBox="0 0 11 10"><path d="M3 9.3V1.2M.8 3.3L3 .9 5.2 3.3" stroke="#3cae4c" stroke-width=".95" fill="none"/><path d="M3.1 6.8C3.6 4.8 5 4.2 9.2 4.2M7.3 2.3L9.5 4.2 7.3 6.1" stroke="#3cae4c" stroke-width=".95" fill="none"/></svg>
<span style="top:375.36px;line-height:11px;height:11px;font-size:8.8px;color:#222;white-space:pre;left:398.50px;transform:scaleX(0.8944);transform-origin:left center;">Grid Orders Comply Hours Conditions</span>
<span style="top:375.36px;line-height:11px;height:11px;font-size:8.8px;color:#222;white-space:pre;left:551.50px;transform:scaleX(0.8874);transform-origin:left center;">false</span>
<svg style="left:383px;top:387px;" width="332" height="16"><rect x="0" y="0.83" width="332" height="14.935" fill="#ebebeb"/></svg>
<svg style="left:383px;top:402px;" width="332" height="2"><rect x="0" y="0.265" width="332" height="1" fill="#dadada"/></svg>
<svg style="left:548px;top:387px;" width="1" height="16"><rect x="0" y="0.83" width="1" height="14.935" fill="#d4d4d4"/></svg>
<svg style="left:385.6px;top:389.697px;" width="11" height="10" viewBox="0 0 11 10"><path d="M3 9.3V1.2M.8 3.3L3 .9 5.2 3.3" stroke="#3cae4c" stroke-width=".95" fill="none"/><path d="M3.1 6.8C3.6 4.8 5 4.2 9.2 4.2M7.3 2.3L9.5 4.2 7.3 6.1" stroke="#3cae4c" stroke-width=".95" fill="none"/></svg>
<span style="top:390.30px;line-height:11px;height:11px;font-size:8.8px;color:#222;white-space:pre;left:398.50px;transform:scaleX(0.9117);transform-origin:left center;">Grid Orders Comply Week Days Condit...</span>
<span style="top:390.30px;line-height:11px;height:11px;font-size:8.8px;color:#222;white-space:pre;left:551.50px;transform:scaleX(0.8874);transform-origin:left center;">false</span>
<svg style="left:383px;top:417px;" width="332" height="2"><rect x="0" y="0.2" width="332" height="1" fill="#dadada"/></svg>
<svg style="left:548px;top:402px;" width="1" height="16"><rect x="0" y="0.765" width="1" height="14.935" fill="#d4d4d4"/></svg>
<svg style="left:386.3px;top:405.732px;" width="9" height="9" viewBox="0 0 9 9"><rect x="1.8" y=".6" width="5.4" height="1.8" fill="#d86060"/><rect x=".2" y="3.6" width="8.6" height="1.8" fill="#4a8ad8"/><rect x="1.8" y="6.6" width="5.4" height="1.8" fill="#d86060"/></svg>
<span style="top:405.23px;line-height:11px;height:11px;font-size:8.8px;color:#222;white-space:pre;left:398.50px;transform:scaleX(0.8946);transform-origin:left center;">Grid Management</span>
<span style="top:405.23px;line-height:11px;height:11px;font-size:8.8px;color:#222;white-space:pre;left:551.50px;transform:scaleX(0.8948);transform-origin:left center;">Fix</span>
<svg style="left:383px;top:417px;" width="332" height="16"><rect x="0" y="0.7" width="332" height="14.935" fill="#ebebeb"/></svg>
<svg style="left:383px;top:432px;" width="332" height="2"><rect x="0" y="0.135" width="332" height="1" fill="#dadada"/></svg>
<svg style="left:548px;top:417px;" width="1" height="16"><rect x="0" y="0.7" width="1" height="14.935" fill="#d4d4d4"/></svg>
<svg style="left:386.5px;top:420.567px;" width="9" height="9" viewBox="0 0 9 9"><path d="M.8 1.8l1.2-1v3.4M6.6 .8L2.4 8.2" stroke="#2f6fb5" stroke-width=".9" fill="none"/><path d="M5.2 5.6c.4-1 2.4-.9 2.2.3-.2.9-1.8 1.5-2.3 2.5h2.6" stroke="#2f6fb5" stroke-width=".9" fill="none"/></svg>
<span style="top:420.17px;line-height:11px;height:11px;font-size:8.8px;color:#222;white-space:pre;left:398.50px;transform:scaleX(0.8806);transform-origin:left center;">Multiplier</span>
<span style="top:420.17px;line-height:11px;height:11px;font-size:8.8px;color:#222;white-space:pre;left:551.50px;transform:scaleX(0.8991);transform-origin:left center;">1.0</span>
<svg style="left:383px;top:447px;" width="332" height="2"><rect x="0" y="0.07" width="332" height="1" fill="#dadada"/></svg>
<svg style="left:548px;top:432px;" width="1" height="16"><rect x="0" y="0.635" width="1" height="14.935" fill="#d4d4d4"/></svg>
<svg style="left:386px;top:436.602px;" width="10" height="7" viewBox="0 0 10 7"><circle cx="2.5" cy="3.6" r="1.9" stroke="#3a86c8" stroke-width="1" fill="none"/><path d="M6 2.4l1.6-1.2v5.4" stroke="#3a86c8" stroke-width="1" fill="none"/></svg>
<span style="top:435.10px;line-height:11px;height:11px;font-size:8.8px;color:#222;white-space:pre;left:398.50px;transform:scaleX(0.9382);transform-origin:left center;">Distance for next order</span>
<span style="top:435.10px;line-height:11px;height:11px;font-size:8.8px;color:#222;white-space:pre;left:551.50px;transform:scaleX(0.8851);transform-origin:left center;">350</span>
<svg style="left:383px;top:447px;" width="332" height="16"><rect x="0" y="0.57" width="332" height="14.935" fill="#ebebeb"/></svg>
<svg style="left:383px;top:462px;" width="332" height="2"><rect x="0" y="0.005" width="332" height="1" fill="#dadada"/></svg>
<svg style="left:548px;top:447px;" width="1" height="16"><rect x="0" y="0.57" width="1" height="14.935" fill="#d4d4d4"/></svg>
<svg style="left:386.5px;top:450.437px;" width="9" height="9" viewBox="0 0 9 9"><path d="M.8 1.8l1.2-1v3.4M6.6 .8L2.4 8.2" stroke="#2f6fb5" stroke-width=".9" fill="none"/><path d="M5.2 5.6c.4-1 2.4-.9 2.2.3-.2.9-1.8 1.5-2.3 2.5h2.6" stroke="#2f6fb5" stroke-width=".9" fill="none"/></svg>
<span style="top:450.04px;line-height:11px;height:11px;font-size:8.8px;color:#222;white-space:pre;left:398.50px;transform:scaleX(0.8815);transform-origin:left center;">Min Distance Multiplier</span>
<span style="top:450.04px;line-height:11px;height:11px;font-size:8.8px;color:#222;white-space:pre;left:551.50px;transform:scaleX(0.8991);transform-origin:left center;">1.0</span>
<svg style="left:383px;top:476px;" width="332" height="2"><rect x="0" y="0.94" width="332" height="1" fill="#dadada"/></svg>
<svg style="left:548px;top:462px;" width="1" height="16"><rect x="0" y="0.505" width="1" height="14.935" fill="#d4d4d4"/></svg>
<svg style="left:385.6px;top:464.372px;" width="11" height="10" viewBox="0 0 11 10"><path d="M3 9.3V1.2M.8 3.3L3 .9 5.2 3.3" stroke="#3cae4c" stroke-width=".95" fill="none"/><path d="M3.1 6.8C3.6 4.8 5 4.2 9.2 4.2M7.3 2.3L9.5 4.2 7.3 6.1" stroke="#3cae4c" stroke-width=".95" fill="none"/></svg>
<span style="top:464.97px;line-height:11px;height:11px;font-size:8.8px;color:#222;white-space:pre;left:398.50px;transform:scaleX(0.9183);transform-origin:left center;">Max 1 Grid Order for bar</span>
<span style="top:464.97px;line-height:11px;height:11px;font-size:8.8px;color:#222;white-space:pre;left:551.50px;transform:scaleX(0.9557);transform-origin:left center;">true</span>
<svg style="left:735px;top:439px;" width="77" height="16"><rect x="0.5" y="1" width="76" height="14" fill="#e1e1e1" stroke="#adadad" stroke-width="1"/></svg>
<span style="top:442.20px;line-height:11px;height:11px;font-size:8.8px;color:#222;white-space:pre;left:763.71px;transform:scaleX(0.8939);transform-origin:center center;">Load</span>
<div style="left:735px;top:463px;width:77px;height:15px;background:#e1e1e1;border:1px solid #adadad;"></div>
<span style="top:465.70px;line-height:11px;height:11px;font-size:8.8px;color:#222;white-space:pre;left:763.47px;transform:scaleX(0.8723);transform-origin:center center;">Save</span>
<svg style="left:644px;top:496px;" width="54" height="16"><rect x="0.75" y="1.25" width="52.5" height="13.5" fill="#e1e1e1" stroke="#0078d7" stroke-width="1.5"/></svg>
<span style="top:499.20px;line-height:11px;height:11px;font-size:8.8px;color:#222;white-space:pre;left:664.64px;transform:scaleX(0.8649);transform-origin:center center;">OK</span>
<svg style="left:704px;top:496px;" width="54" height="16"><rect x="0.5" y="1" width="53" height="14" fill="#e1e1e1" stroke="#adadad" stroke-width="1"/></svg>
<span style="top:499.20px;line-height:11px;height:11px;font-size:8.8px;color:#222;white-space:pre;left:717.30px;transform:scaleX(0.8945);transform-origin:center center;">Cancel</span>
<svg style="left:763px;top:496px;" width="55" height="16"><rect x="1" y="1" width="53" height="14" fill="#e1e1e1" stroke="#adadad" stroke-width="1"/></svg>
<span style="top:499.20px;line-height:11px;height:11px;font-size:8.8px;color:#222;white-space:pre;left:779.01px;transform:scaleX(0.9354);transform-origin:center center;">Reset</span>
<svg style="left:818px;top:509px;" width="7" height="7" viewBox="0 0 7 7"><g fill="#b0b0b0"><rect x="5" y="1" width="1" height="1"/><rect x="3" y="3" width="1" height="1"/><rect x="5" y="3" width="1" height="1"/><rect x="1" y="5" width="1" height="1"/><rect x="3" y="5" width="1" height="1"/><rect x="5" y="5" width="1" height="1"/></g></svg>
<svg style="left:597.5px;top:343px;" width="11" height="16" viewBox="0 0 11 16"><path d="M1 1v11.2l2.6-2.4 2 4.4 1.8-.8-2-4.3h3.6z" fill="#fff" stroke="#222" stroke-width=".9" stroke-linejoin="round"/></svg>
</div></body></html>
